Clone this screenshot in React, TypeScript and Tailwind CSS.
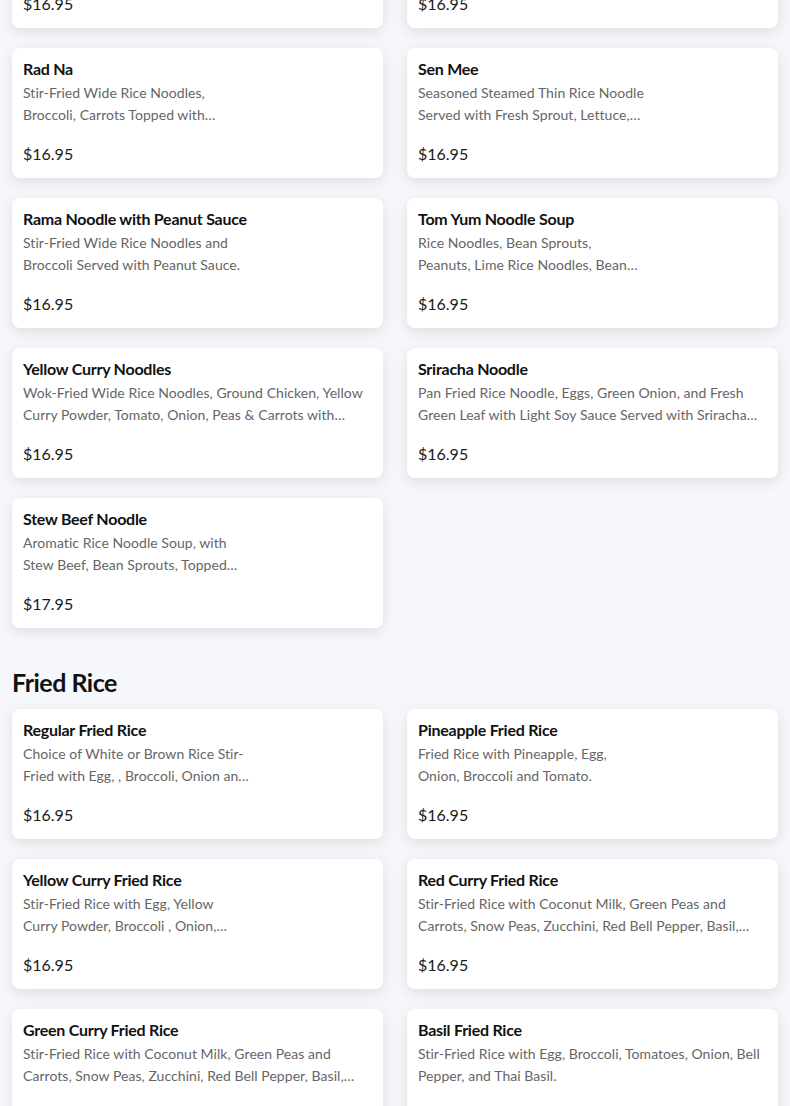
import React from "react";

type Item = { name: string; desc: string; price: string; narrow?: boolean };

const noodles: Item[] = [
  { name: "Pad See Ew", desc: "Stir-Fried Wide Rice Noodles with Egg, Broccoli and Carrots in Sweet Soy Sauce.", price: "$16.95", narrow: true },
  { name: "Drunken Noodle", desc: "Stir-Fried Wide Rice Noodles with Egg, Tomato, Onion, Bell Pepper and Thai Basil.", price: "$16.95", narrow: true },
  { name: "Rad Na", desc: "Stir-Fried Wide Rice Noodles, Broccoli, Carrots Topped with Special Gravy Sauce.", price: "$16.95", narrow: true },
  { name: "Sen Mee", desc: "Seasoned Steamed Thin Rice Noodle Served with Fresh Sprout, Lettuce, Cilantro and Peanuts.", price: "$16.95", narrow: true },
  { name: "Rama Noodle with Peanut Sauce", desc: "Stir-Fried Wide Rice Noodles and Broccoli Served with Peanut Sauce.", price: "$16.95", narrow: true },
  { name: "Tom Yum Noodle Soup", desc: "Rice Noodles, Bean Sprouts, Peanuts, Lime Rice Noodles, Bean Sprouts, Peanuts and Lime.", price: "$16.95", narrow: true },
  { name: "Yellow Curry Noodles", desc: "Wok-Fried Wide Rice Noodles, Ground Chicken, Yellow Curry Powder, Tomato, Onion, Peas & Carrots with Scrambled Egg.", price: "$16.95" },
  { name: "Sriracha Noodle", desc: "Pan Fried Rice Noodle, Eggs, Green Onion, and Fresh Green Leaf with Light Soy Sauce Served with Sriracha Sauce.", price: "$16.95" },
  { name: "Stew Beef Noodle", desc: "Aromatic Rice Noodle Soup, with Stew Beef, Bean Sprouts, Topped with Cilantro and Green Onion.", price: "$17.95", narrow: true },
];

const friedRice: Item[] = [
  { name: "Regular Fried Rice", desc: "Choice of White or Brown Rice Stir-Fried with Egg, , Broccoli, Onion and Tomato.", price: "$16.95", narrow: true },
  { name: "Pineapple Fried Rice", desc: "Fried Rice with Pineapple, Egg, Onion, Broccoli and Tomato.", price: "$16.95", narrow: true },
  { name: "Yellow Curry Fried Rice", desc: "Stir-Fried Rice with Egg, Yellow Curry Powder, Broccoli , Onion, Tomato and Carrots.", price: "$16.95", narrow: true },
  { name: "Red Curry Fried Rice", desc: "Stir-Fried Rice with Coconut Milk, Green Peas and Carrots, Snow Peas, Zucchini, Red Bell Pepper, Basil, Bamboo Shoots and Red Curry Paste.", price: "$16.95" },
  { name: "Green Curry Fried Rice", desc: "Stir-Fried Rice with Coconut Milk, Green Peas and Carrots, Snow Peas, Zucchini, Red Bell Pepper, Basil, Bamboo Shoots and Green Curry Paste.", price: "$16.95" },
  { name: "Basil Fried Rice", desc: "Stir-Fried Rice with Egg, Broccoli, Tomatoes, Onion, Bell Pepper, and Thai Basil.", price: "$16.95" },
];

function Card({ item }: { item: Item }) {
  return (
    <div className="bg-white rounded-lg shadow-[0_4px_14px_rgba(0,0,0,0.10)] pt-[9px] pb-3 pl-[11px] pr-[12px] h-[130px] flex flex-col">
      <div className="text-[16px] leading-[24px] font-bold text-[#111] tracking-[-0.25px]">{item.name}</div>
      <div
        className={
          "mt-[1px] text-[14px] leading-[22px] text-[#666] tracking-[0.05px] line-clamp-2 h-[44px] " +
          (item.narrow ? "w-[227px]" : "w-full")
        }
      >
        {item.desc}
      </div>
      <div className="mt-[16px] text-[16px] leading-[24px] text-[#1a1a1a]">{item.price}</div>
    </div>
  );
}

export default function App() {
  return (
    <div className="min-h-screen bg-[#f6f7fa] overflow-hidden" style={{ fontFamily: "Lato, 'Noto Sans', sans-serif" }}>
      <div className="px-3 mt-[-102px]">
        <div className="grid grid-cols-2 gap-x-6 gap-y-5">
          {noodles.map((it) => (
            <Card key={it.name} item={it} />
          ))}
        </div>
        <h2 className="mt-[36px] mb-[9px] text-[25px] leading-[36px] font-bold text-[#111] tracking-[-0.5px]">Fried Rice</h2>
        <div className="grid grid-cols-2 gap-x-6 gap-y-5 pb-10">
          {friedRice.map((it) => (
            <Card key={it.name} item={it} />
          ))}
        </div>
      </div>
    </div>
  );
}
